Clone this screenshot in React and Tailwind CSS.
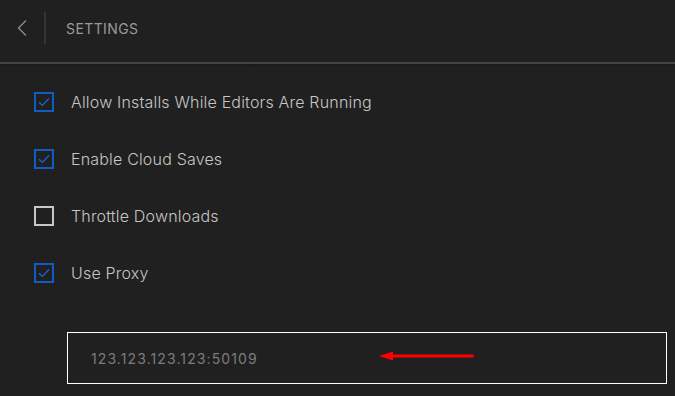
import { useState } from "react";

const options = [
  { label: "Allow Installs While Editors Are Running", checked: true },
  { label: "Enable Cloud Saves", checked: true },
  { label: "Throttle Downloads", checked: false },
  { label: "Use Proxy", checked: true },
];

function CheckBox({ checked }) {
  return (
    <div
      className={
        checked
          ? "w-5 h-5 border-2 border-[#0f5cc4] flex items-center justify-center"
          : "w-5 h-5 border-2 border-[#c8c8c8] flex items-center justify-center"
      }
    >
      {checked && (
        <svg width="12" height="10" viewBox="0 0 12 10" fill="none">
          <path d="M1 5.2 L4.4 8.4 L11 1.5" stroke="#1565d0" strokeWidth="1.3" />
        </svg>
      )}
    </div>
  );
}

export default function App() {
  const [proxy, setProxy] = useState("123.123.123.123:50109");

  return (
    <div
      className="w-[675px] h-[396px] bg-[#202020] overflow-hidden"
      style={{ fontFamily: "Inter, Roboto, 'Liberation Sans', sans-serif" }}
    >
      {/* HEADER */}
      <div className="h-[62px] pb-[6px] bg-[#202020] flex items-center">
        <div className="w-[44px] flex justify-center">
          <svg width="12" height="18" viewBox="0 0 12 18" fill="none">
            <path d="M10 1.5 L2.5 9 L10 16.5" stroke="#8a8a8a" strokeWidth="1.4" />
          </svg>
        </div>
        <div className="w-[2px] h-[32px] bg-[#343434]" />
        <h1 className="ml-[20px] text-[14px] tracking-[0.4px] text-[#9a9a9a]">
          SETTINGS
        </h1>
      </div>
      <div className="h-[2px] bg-[#444444]" />
      <div className="h-[3px] bg-gradient-to-b from-[#191919] to-[#202020]" />

      {/* OPTIONS */}
      <div className="pl-[34px] pt-[25px] flex flex-col gap-[37px]">
        {options.map((item) => (
          <div key={item.label} className="flex items-center h-[20px]">
            <CheckBox checked={item.checked} />
            <span className="ml-[17px] text-[16px] font-light tracking-[0.18px] text-[#c6c6c6]">
              {item.label}
            </span>
          </div>
        ))}
      </div>

      {/* PROXY INPUT */}
      <div className="ml-[67px] mt-[49px] w-[600px] h-[52px] border-[1.5px] border-white flex items-center relative">
        <input
          value={proxy}
          onChange={(e) => setProxy(e.target.value)}
          className="ml-[23px] w-[280px] bg-transparent outline-none text-[14px] tracking-[1.1px] text-[#7c7c7c]"
        />
        <svg
          className="absolute left-[311px] top-[18px]"
          width="96"
          height="10"
          viewBox="0 0 96 10"
        >
          <path d="M0 5 L14 0.5 L14 9.5 Z" fill="#ff0000" />
          <rect x="12" y="3.5" width="83" height="3" rx="1.5" fill="#ff0000" />
        </svg>
      </div>
    </div>
  );
}
